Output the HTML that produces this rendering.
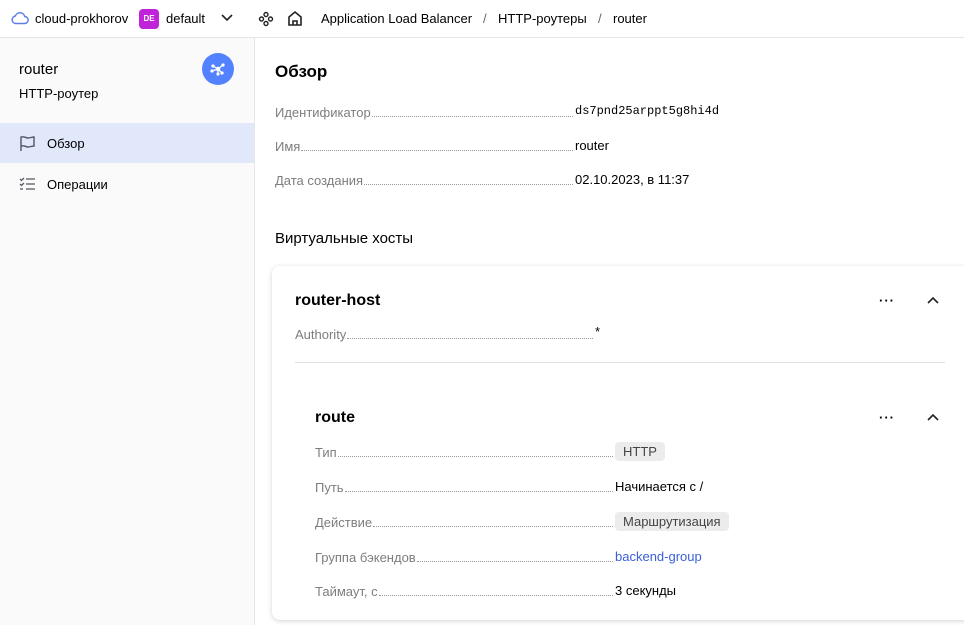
<!DOCTYPE html><html><head><meta charset="utf-8"><style>
*{box-sizing:border-box;margin:0;padding:0}
body{width:964px;height:625px;overflow:hidden;background:#fff;font-family:"Liberation Sans","Noto Sans CJK SC",sans-serif;font-size:13px;color:#000;position:relative}
.a{position:absolute}
.top{left:0;top:0;width:964px;height:38px;border-bottom:1px solid #e5e5e5}
.side{left:0;top:38px;width:255px;height:587px;background:#fafafa;border-right:1px solid #e5e5e5}
.row{position:absolute;display:flex;align-items:flex-end;height:16px}
.k{color:#7d7d7d;white-space:nowrap}
.d{flex:1;border-bottom:1px dotted #999;margin:0 2px 3px 1px}
.v{white-space:nowrap;position:absolute}
.tag{background:#ececec;border-radius:4px;padding:2px 8px;color:#444}
.dots{font-weight:bold;letter-spacing:1px}
</style></head><body>
<div class="a top">
 <svg class="a" style="left:11px;top:11px" width="18" height="14" viewBox="0 0 18 14"><path d="M4.5 12.5h9a3.5 3.5 0 0 0 .3-7A5 5 0 0 0 4.3 5a3.8 3.8 0 0 0 .2 7.5z" fill="none" stroke="#5b7fe8" stroke-width="1.5"/></svg>
 <span class="a" style="left:35px;top:11px">cloud-prokhorov</span>
 <div class="a" style="left:139px;top:9px;width:20px;height:20px;background:#c024d8;border-radius:4px;color:#fff;font-size:8px;font-weight:bold;text-align:center;line-height:20px">DE</div>
 <span class="a" style="left:166px;top:11px">default</span>
 <svg class="a" style="left:221px;top:14px" width="12" height="8"><path d="M1 1l5 5 5-5" fill="none" stroke="#222" stroke-width="1.6"/></svg>
 <svg class="a" style="left:258px;top:11px" width="16" height="16" viewBox="0 0 16 16" fill="none" stroke="#222" stroke-width="1.4"><circle cx="8" cy="3.5" r="2"/><circle cx="3.5" cy="8" r="2"/><circle cx="12.5" cy="8" r="2"/><circle cx="8" cy="12.5" r="2"/></svg>
 <svg class="a" style="left:287px;top:10px" width="16" height="17" viewBox="0 0 16 17" fill="none" stroke="#222" stroke-width="1.6"><path d="M2 15V7l6-5 6 5v8zM6 15v-4h4v4"/></svg>
 <span class="a" style="left:321px;top:11px">Application Load Balancer</span>
 <span class="a" style="left:483px;top:11px;color:#666">/</span>
 <span class="a" style="left:498px;top:11px">HTTP-роутеры</span>
 <span class="a" style="left:598px;top:11px;color:#666">/</span>
 <span class="a" style="left:613px;top:11px">router</span>
</div>
<div class="a side">
 <span class="a" style="left:19px;top:23px;font-size:15px">router</span>
 <span class="a" style="left:19px;top:48px">HTTP-роутер</span>
 <div class="a" style="left:202px;top:15px;width:32px;height:32px;border-radius:50%;background:#5282ff"><svg width="32" height="32" viewBox="0 0 32 32" stroke="#fff" stroke-width="1.3" fill="#fff"><path d="M16 16L11 13M16 16l5-4M16 16v5M16 16l4 4M16 16l-6 2"/><circle cx="16" cy="16" r="1.6"/><circle cx="11" cy="13" r="1"/><circle cx="21" cy="12" r="1"/><circle cx="16" cy="21" r="1"/><circle cx="20" cy="20" r="1"/><circle cx="10" cy="18" r="1"/></svg></div>
 <div class="a" style="left:0;top:85px;width:254px;height:40px;background:#e0e8fa"></div>
 <svg class="a" style="left:19px;top:97px" width="17" height="17" viewBox="0 0 17 17" fill="none" stroke="#556" stroke-width="1.4"><path d="M2 16V2c3-1 5 1 7 1s4-1 6-1v9c-2 0-4 1-6 1s-4-2-7-1"/></svg>
 <span class="a" style="left:47px;top:98px">Обзор</span>
 <svg class="a" style="left:19px;top:139px" width="17" height="14" viewBox="0 0 17 14" fill="none" stroke="#556" stroke-width="1.3"><path d="M1 2l1.5 1.5L5 1M1 7l1.5 1.5L5 6M1 12h3M7 2h9M7 7h9M7 12h9"/></svg>
 <span class="a" style="left:47px;top:139px">Операции</span>
</div>
<span class="a" style="left:275px;top:62px;font-size:17px;font-weight:bold">Обзор</span>
<div class="row" style="left:275px;top:104px;width:300px"><span class="k">Идентификатор</span><span class="d"></span></div><span class="v" style="left:575px;top:104px;font-family:'Liberation Mono',monospace;font-size:12px">ds7pnd25arppt5g8hi4d</span>
<div class="row" style="left:275px;top:138px;width:300px"><span class="k">Имя</span><span class="d"></span></div><span class="v" style="left:575px;top:138px">router</span>
<div class="row" style="left:275px;top:172px;width:300px"><span class="k">Дата создания</span><span class="d"></span></div><span class="v" style="left:575px;top:172px">02.10.2023, в 11:37</span>
<span class="a" style="left:275px;top:230px;font-size:15px">Виртуальные хосты</span>
<div class="a" style="left:272px;top:266px;width:700px;height:354px;border-radius:8px;box-shadow:0 1px 5px rgba(0,0,0,.18);background:#fff"></div>
<span class="a" style="left:295px;top:292px;font-size:16px;font-weight:bold">router-host</span>
<span class="a dots" style="left:879px;top:293px">···</span>
<svg class="a" style="left:927px;top:297px" width="12" height="8"><path d="M1 6l5-5 5 5" fill="none" stroke="#222" stroke-width="1.6"/></svg>
<div class="row" style="left:295px;top:326px;width:300px"><span class="k">Authority</span><span class="d"></span></div><span class="v" style="left:595px;top:324px">*</span>
<div class="a" style="left:295px;top:362px;width:650px;height:1px;background:#e0e0e0"></div>
<span class="a" style="left:315px;top:409px;font-size:16px;font-weight:bold">route</span>
<span class="a dots" style="left:879px;top:410px">···</span>
<svg class="a" style="left:927px;top:414px" width="12" height="8"><path d="M1 6l5-5 5 5" fill="none" stroke="#222" stroke-width="1.6"/></svg>
<div class="row" style="left:315px;top:444px;width:300px"><span class="k">Тип</span><span class="d"></span></div><span class="v tag" style="left:615px;top:442px">HTTP</span>
<div class="row" style="left:315px;top:479px;width:300px"><span class="k">Путь</span><span class="d"></span></div><span class="v" style="left:615px;top:479px">Начинается с /</span>
<div class="row" style="left:315px;top:514px;width:300px"><span class="k">Действие</span><span class="d"></span></div><span class="v tag" style="left:615px;top:512px">Маршрутизация</span>
<div class="row" style="left:315px;top:549px;width:300px"><span class="k">Группа бэкендов</span><span class="d"></span></div><span class="v" style="left:615px;top:549px;color:#3b5fd9">backend-group</span>
<div class="row" style="left:315px;top:583px;width:300px"><span class="k">Таймаут, с</span><span class="d"></span></div><span class="v" style="left:615px;top:583px">3 секунды</span>
</body></html>
